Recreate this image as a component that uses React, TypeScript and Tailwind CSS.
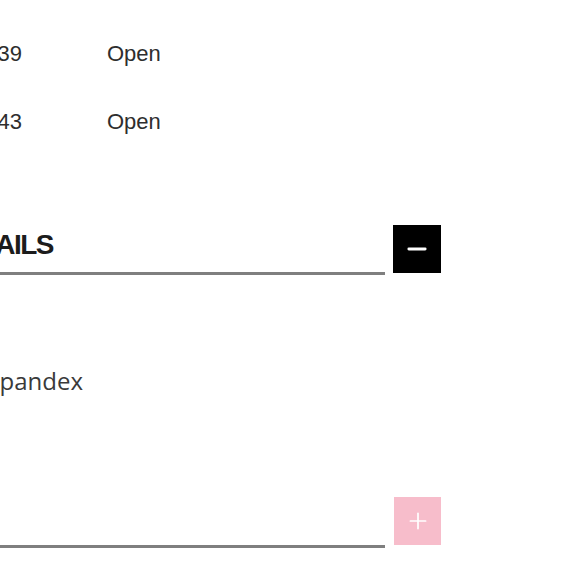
import { Minus, Plus } from "lucide-react";

const rows = [
  { id: "BA-22-1139", status: "Open" },
  { id: "BA-22-1143", status: "Open" },
];

export default function App() {
  return (
    <div className="w-[580px] h-[580px] overflow-hidden bg-white">
      {/* page content is scrolled sideways: the left part sits out of view */}
      <div className="-ml-[300px] w-[760px] flex flex-col">
        {/* Order table */}
        <div className="pt-[38px] flex flex-col gap-[36px] font-['Liberation_Sans',Arial,sans-serif] text-[22px] leading-[32px] text-[#2e2e2e]">
          {rows.map((r) => (
            <div key={r.id} className="flex gap-[85px]">
              <span className="w-[322px] text-right whitespace-nowrap">{r.id}</span>
              <span>{r.status}</span>
            </div>
          ))}
        </div>

        {/* Details accordion (open) */}
        <div className="mt-[87px] flex items-start gap-[8px]">
          <div className="w-[685px] pt-[6px] pb-[13px] border-b-[3px] border-[#7f7f7f]">
            <div className="w-[353px] text-right whitespace-nowrap font-['Liberation_Sans',Arial,sans-serif] font-bold text-[28px] leading-[28px] tracking-[-1.5px] text-[#1c1c1c]">
              PRODUCT DETAILS
            </div>
          </div>
          <button className="w-[48px] h-[48px] bg-black flex items-center justify-center">
            <Minus className="w-[28px] h-[28px] text-white" strokeWidth={2.4} />
          </button>
        </div>

        <div className="mt-[90px] w-[383px] text-right whitespace-nowrap font-['Open_Sans',sans-serif] text-[24px] leading-[32px] text-[#3a3a3a]">
          92% Nylon, 8% Spandex
        </div>

        {/* Care accordion (closed) */}
        <div className="mt-[100px] flex items-start gap-[9px]">
          <div className="w-[685px] h-[51px] border-b-[3px] border-[#7f7f7f] flex items-center">
            <div className="w-[280px] text-right whitespace-nowrap font-['Liberation_Sans',Arial,sans-serif] font-bold text-[28px] tracking-[-1.5px] text-[#1c1c1c]">
              CARE
            </div>
          </div>
          <button className="w-[47px] h-[48px] bg-[#f7bdcb] flex items-center justify-center">
            <Plus className="w-[26px] h-[26px] text-white" strokeWidth={1.6} />
          </button>
        </div>
      </div>
    </div>
  );
}
